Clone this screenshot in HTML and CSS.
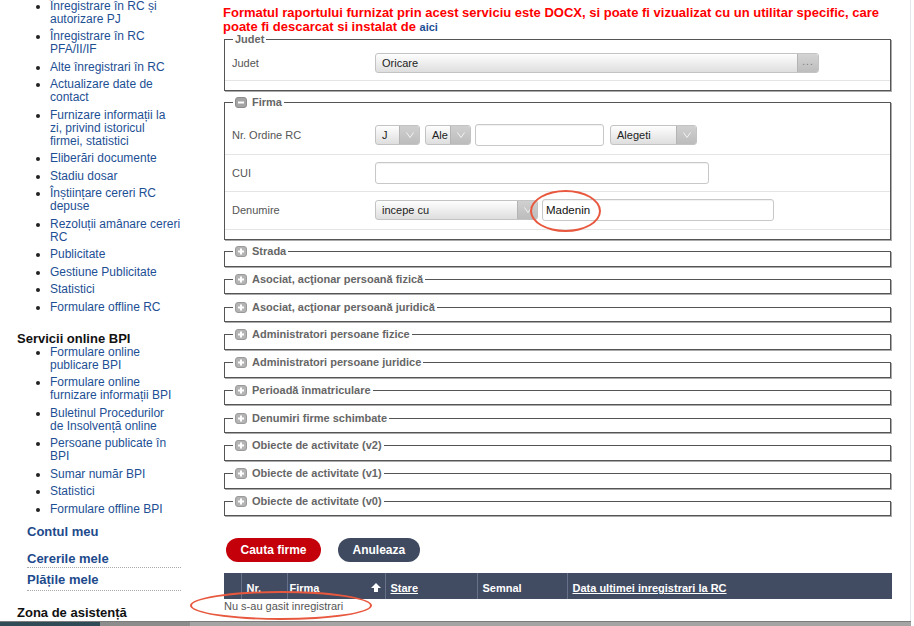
FILE: index.html
```html
<!DOCTYPE html>
<html lang="ro">
<head>
    <meta charset="UTF-8">
    <meta name="viewport" content="width=device-width, initial-scale=1.0">
    <title>Cautare firme</title>
    <link rel="stylesheet" href="styles.css">
</head>
<body>
<div class="window">
    <div class="page">
        <div class="sidebar">
            <ul class="menu first">
                <li><a href="#">Înregistrare în RC și<br>autorizare PJ</a></li>
                <li><a href="#">Înregistrare în RC<br>PFA/II/IF</a></li>
                <li><a href="#">Alte înregistrari în RC</a></li>
                <li><a href="#">Actualizare date de<br>contact</a></li>
                <li><a href="#">Furnizare informații la<br>zi, privind istoricul<br>firmei, statistici</a></li>
                <li><a href="#">Eliberări documente</a></li>
                <li><a href="#">Stadiu dosar</a></li>
                <li><a href="#">Înștiințare cereri RC<br>depuse</a></li>
                <li><a href="#">Rezoluții amânare cereri<br>RC</a></li>
                <li><a href="#">Publicitate</a></li>
                <li><a href="#">Gestiune Publicitate</a></li>
                <li><a href="#">Statistici</a></li>
                <li><a href="#">Formulare offline RC</a></li>
            </ul>
            <div class="side-title">Servicii online BPI</div>
            <ul class="menu">
                <li><a href="#">Formulare online<br>publicare BPI</a></li>
                <li><a href="#">Formulare online<br>furnizare informații BPI</a></li>
                <li><a href="#">Buletinul Procedurilor<br>de Insolvență online</a></li>
                <li><a href="#">Persoane publicate în<br>BPI</a></li>
                <li><a href="#">Sumar număr BPI</a></li>
                <li><a href="#">Statistici</a></li>
                <li><a href="#">Formulare offline BPI</a></li>
            </ul>
            <div class="account">
                <a href="#" class="acc-title">Contul meu</a>
                <a href="#" class="acc-link">Cererile mele</a>
                <a href="#" class="acc-link last">Plățile mele</a>
            </div>
            <div class="side-title help">Zona de asistență</div>
        </div>

        <div class="content">
            <p class="notice">Formatul raportului furnizat prin acest serviciu este DOCX, si poate fi vizualizat cu un utilitar specific, care<br>poate fi descarcat si instalat de <a href="#">aici</a></p>

            <fieldset class="box judet">
                <legend>Judet</legend>
                <div class="row">
                    <span class="lbl">Judet</span>
                    <div class="sel w-jud"><span class="val">Oricare</span><span class="dots">...</span></div>
                </div>
            </fieldset>

            <fieldset class="box firma">
                <legend><svg class="tgl" width="12" height="11" viewBox="0 0 12 11"><rect x="0.5" y="0.5" width="11" height="10" rx="2.5" fill="#a4a4a4" stroke="#8c8c8c"/><path d="M3 5.5h6" stroke="#fff" stroke-width="2"/></svg>Firma</legend>
                <div class="row top">
                    <span class="lbl">Nr. Ordine RC</span>
                    <div class="sel w-j"><span class="val">J</span><span class="arr"><svg width="8" height="6" viewBox="0 0 8 6"><path d="M0.5 0.5L4 5.5L7.5 0.5" fill="none" stroke="#f3f3f3"/></svg></span></div>
                    <div class="sel w-ale"><span class="val">Ale</span><span class="arr"><svg width="8" height="6" viewBox="0 0 8 6"><path d="M0.5 0.5L4 5.5L7.5 0.5" fill="none" stroke="#f3f3f3"/></svg></span></div>
                    <input class="inp w-nr" type="text" value="">
                    <div class="sel w-alg"><span class="val">Alegeti</span><span class="arr"><svg width="8" height="6" viewBox="0 0 8 6"><path d="M0.5 0.5L4 5.5L7.5 0.5" fill="none" stroke="#f3f3f3"/></svg></span></div>
                </div>
                <div class="row">
                    <span class="lbl">CUI</span>
                    <input class="inp w-cui" type="text" value="">
                </div>
                <div class="row">
                    <span class="lbl">Denumire</span>
                    <div class="sel w-den"><span class="val">incepe cu</span><span class="arr"><svg width="8" height="6" viewBox="0 0 8 6"><path d="M0.5 0.5L4 5.5L7.5 0.5" fill="none" stroke="#f3f3f3"/></svg></span></div>
                    <input class="inp w-mad" type="text" value="Madenin">
                </div>
            </fieldset>

            <fieldset class="box fold first-fold"><legend><svg class="tgl" width="12" height="11" viewBox="0 0 12 11"><rect x="0.5" y="0.5" width="11" height="10" rx="2.5" fill="#b4b4b4" stroke="#9a9a9a"/><path d="M3 5.5h6M6 2.5v6" stroke="#fff" stroke-width="2"/></svg>Strada</legend></fieldset>
            <fieldset class="box fold"><legend><svg class="tgl" width="12" height="11" viewBox="0 0 12 11"><rect x="0.5" y="0.5" width="11" height="10" rx="2.5" fill="#b4b4b4" stroke="#9a9a9a"/><path d="M3 5.5h6M6 2.5v6" stroke="#fff" stroke-width="2"/></svg>Asociat, acţionar persoană fizică</legend></fieldset>
            <fieldset class="box fold"><legend><svg class="tgl" width="12" height="11" viewBox="0 0 12 11"><rect x="0.5" y="0.5" width="11" height="10" rx="2.5" fill="#b4b4b4" stroke="#9a9a9a"/><path d="M3 5.5h6M6 2.5v6" stroke="#fff" stroke-width="2"/></svg>Asociat, acţionar persoană juridică</legend></fieldset>
            <fieldset class="box fold"><legend><svg class="tgl" width="12" height="11" viewBox="0 0 12 11"><rect x="0.5" y="0.5" width="11" height="10" rx="2.5" fill="#b4b4b4" stroke="#9a9a9a"/><path d="M3 5.5h6M6 2.5v6" stroke="#fff" stroke-width="2"/></svg>Administratori persoane fizice</legend></fieldset>
            <fieldset class="box fold"><legend><svg class="tgl" width="12" height="11" viewBox="0 0 12 11"><rect x="0.5" y="0.5" width="11" height="10" rx="2.5" fill="#b4b4b4" stroke="#9a9a9a"/><path d="M3 5.5h6M6 2.5v6" stroke="#fff" stroke-width="2"/></svg>Administratori persoane juridice</legend></fieldset>
            <fieldset class="box fold"><legend><svg class="tgl" width="12" height="11" viewBox="0 0 12 11"><rect x="0.5" y="0.5" width="11" height="10" rx="2.5" fill="#b4b4b4" stroke="#9a9a9a"/><path d="M3 5.5h6M6 2.5v6" stroke="#fff" stroke-width="2"/></svg>Perioadă înmatriculare</legend></fieldset>
            <fieldset class="box fold"><legend><svg class="tgl" width="12" height="11" viewBox="0 0 12 11"><rect x="0.5" y="0.5" width="11" height="10" rx="2.5" fill="#b4b4b4" stroke="#9a9a9a"/><path d="M3 5.5h6M6 2.5v6" stroke="#fff" stroke-width="2"/></svg>Denumiri firme schimbate</legend></fieldset>
            <fieldset class="box fold"><legend><svg class="tgl" width="12" height="11" viewBox="0 0 12 11"><rect x="0.5" y="0.5" width="11" height="10" rx="2.5" fill="#b4b4b4" stroke="#9a9a9a"/><path d="M3 5.5h6M6 2.5v6" stroke="#fff" stroke-width="2"/></svg>Obiecte de activitate (v2)</legend></fieldset>
            <fieldset class="box fold"><legend><svg class="tgl" width="12" height="11" viewBox="0 0 12 11"><rect x="0.5" y="0.5" width="11" height="10" rx="2.5" fill="#b4b4b4" stroke="#9a9a9a"/><path d="M3 5.5h6M6 2.5v6" stroke="#fff" stroke-width="2"/></svg>Obiecte de activitate (v1)</legend></fieldset>
            <fieldset class="box fold"><legend><svg class="tgl" width="12" height="11" viewBox="0 0 12 11"><rect x="0.5" y="0.5" width="11" height="10" rx="2.5" fill="#b4b4b4" stroke="#9a9a9a"/><path d="M3 5.5h6M6 2.5v6" stroke="#fff" stroke-width="2"/></svg>Obiecte de activitate (v0)</legend></fieldset>

            <div class="actions">
                <button class="btn red">Cauta firme</button>
                <button class="btn dark">Anuleaza</button>
            </div>

            <table class="grid">
                <colgroup>
                    <col class="c0"><col class="c1"><col class="c2"><col class="c3"><col class="c4"><col>
                </colgroup>
                <thead>
                    <tr>
                        <th></th>
                        <th>Nr.</th>
                        <th class="firm">Firma<svg class="sort" width="10" height="9" viewBox="0 0 10 9"><path d="M5 0L10 5H7V9H3V5H0Z" fill="#fff"/></svg></th>
                        <th><a href="#">Stare</a></th>
                        <th>Semnal</th>
                        <th><a href="#">Data ultimei inregistrari la RC</a></th>
                    </tr>
                </thead>
            </table>
            <div class="empty">Nu s-au gasit inregistrari</div>
        </div>

        <div class="mark m1"></div>
        <div class="mark m2"></div>
    </div>
    <div class="taskbar"><span class="tb-a"></span><span class="tb-b"></span></div>
</div>
</body>
</html>
```

FILE: styles.css
```css
body {
    margin: 0;
    font-family: "Liberation Sans", Arial, Helvetica, sans-serif;
    background: #fff;
}
.window {
    width: 914px;
    height: 626px;
    overflow: hidden;
    position: relative;
}
.page {
    display: flex;
    width: 910px;
    height: 621px;
    position: relative;
    border-right: 1px solid #e3e8ee;
}

/* sidebar */
.sidebar {
    width: 224px;
    flex: none;
}
.menu {
    margin: 0;
    padding-left: 50px;
    list-style: disc;
    font-size: 12px;
    line-height: 13px;
    color: #222;
}
.menu.first {
    margin-top: -0.5px;
}
.menu li {
    margin-bottom: 4.5px;
    white-space: nowrap;
}
.menu a {
    color: #1d4f94;
    text-decoration: none;
}
.side-title {
    margin: 17px 0 0 17px;
    font-size: 13px;
    line-height: 15px;
    font-weight: bold;
    color: #111;
}
.side-title.help {
    margin-top: 14px;
}
.account {
    margin: 8px 0 0 27px;
    width: 154px;
}
.account a {
    display: block;
    font-size: 13px;
    line-height: 15px;
    font-weight: bold;
    color: #1d4a8c;
    text-decoration: none;
}
.acc-link {
    margin-top: 12px;
    padding-bottom: 1px;
    border-bottom: 1px dotted #aaa;
}
.acc-link.last {
    margin-top: 4.5px;
    padding-bottom: 2.5px;
}

/* main */
.content {
    width: 668px;
    flex: none;
}
.notice {
    margin: 0 0 0 -1px;
    padding-top: 6px;
    font-size: 13px;
    line-height: 14px;
    font-weight: bold;
    color: #f00;
    white-space: nowrap;
}
.notice a {
    color: #1d4f94;
    font-size: 11px;
    text-decoration: none;
}
.box {
    margin: 0;
    padding: 0;
    min-width: 0;
    width: 667px;
    box-sizing: border-box;
    border: 1px solid #555;
    box-shadow: 1px 1px 0 #aaa;
}
.box legend {
    margin-left: 8px;
    padding: 0 2px;
    font-size: 11px;
    line-height: 13px;
    font-weight: bold;
    color: #666;
}
.tgl {
    vertical-align: -2px;
    margin-right: 5px;
}
.judet {
    margin-top: -1px;
    padding-bottom: 9px;
}
.judet .row {
    padding-top: 6px;
    padding-bottom: 6px;
}
.firma {
    margin-top: 5px;
    padding-bottom: 9.5px;
}
.fold {
    margin-top: 6.25px;
    padding-bottom: 7.5px;
}
.fold.first-fold {
    margin-top: 5px;
}
.row {
    display: flex;
    align-items: center;
    min-height: 22px;
    padding: 7px 0 7.5px 7px;
    border-bottom: 1px solid #e4e4e4;
}
.row.top {
    padding-top: 15px;
}
.lbl {
    width: 143px;
    flex: none;
    font-size: 11px;
    color: #555;
}
.sel {
    display: flex;
    height: 20px;
    box-sizing: border-box;
    border: 1px solid #c3c3c3;
    border-radius: 3px;
    background: linear-gradient(#fefefe, #dedede);
    font-size: 11px;
    color: #222;
    overflow: hidden;
}
.sel .val {
    flex: 1;
    padding-left: 6px;
    line-height: 18px;
    white-space: nowrap;
}
.sel .arr {
    width: 19px;
    display: flex;
    align-items: center;
    justify-content: center;
    background: linear-gradient(#d0d0d0, #bcbcbc);
    border-left: 1px solid #b4b4b4;
}
.sel .dots {
    width: 20px;
    text-align: center;
    line-height: 16px;
    font-size: 10px;
    letter-spacing: 1px;
    color: #7a7a7a;
    background: linear-gradient(#d4d4d4, #bdbdbd);
    border-left: 1px solid #b4b4b4;
}
.inp {
    height: 22px;
    box-sizing: border-box;
    margin: 0;
    padding: 0 3px;
    border: 1px solid #c8c8c8;
    border-radius: 3px;
    box-shadow: inset 0 1px 1px rgba(0, 0, 0, 0.06);
    font: 11.5px "Liberation Sans", Arial, sans-serif;
    color: #111;
    outline: none;
}
.w-jud { width: 444px; }
.w-j { width: 45px; }
.w-ale { width: 46px; margin-left: 5px; }
.w-nr { width: 129px; margin-left: 4px; }
.w-alg { width: 87px; margin-left: 6px; }
.w-cui { width: 334px; }
.w-den { width: 163px; }
.w-mad { width: 232px; margin-left: 4px; }

.actions {
    display: flex;
    gap: 17px;
    margin: 22px 0 0 2px;
}
.btn {
    height: 24px;
    padding: 0 14.5px;
    border: none;
    border-radius: 12px;
    font-family: "Liberation Sans", Arial, sans-serif;
    font-size: 12px;
    font-weight: bold;
    color: #fff;
    cursor: pointer;
}
.btn.red {
    background: #c4000b;
}
.btn.dark {
    background: #3f4a61;
}

.grid {
    margin-top: 11px;
    width: 668px;
    table-layout: fixed;
    border-collapse: collapse;
    background: #414b62;
}
.c0 { width: 17px; }
.c1 { width: 46px; }
.c2 { width: 98px; }
.c3 { width: 92px; }
.c4 { width: 90px; }
.grid tr {
    height: 26px;
}
.grid th {
    padding: 9px 0 0 5px;
    vertical-align: top;
    text-align: left;
    font-size: 11px;
    line-height: 13px;
    color: #fff;
    white-space: nowrap;
    overflow: hidden;
    border-left: 1px solid #68718a;
}
.grid th:first-child {
    border-left: none;
}
.grid th.firm {
    padding-left: 2px;
}
.grid th a {
    color: #fff;
    text-decoration: underline;
}
.sort {
    float: right;
    margin: 1px 4px 0 0;
}
.empty {
    font-size: 11px;
    line-height: 14px;
    color: #555;
}

/* annotations drawn over the screenshot */
.mark {
    position: absolute;
    box-sizing: border-box;
    border: 2px solid #e8583e;
    border-radius: 50%;
}
.m1 {
    left: 530px;
    top: 190px;
    width: 71px;
    height: 42px;
}
.m2 {
    left: 190px;
    top: 591px;
    width: 182px;
    height: 29px;
}

.taskbar {
    display: flex;
    height: 5px;
    width: 911px;
    box-sizing: border-box;
    border-top: 1px solid #7c7c7c;
    background: #a4a4a4;
}
.tb-a {
    width: 100px;
    background: #2f4b55;
}
.tb-b {
    width: 90px;
    background: #8c8c8c;
}
```
